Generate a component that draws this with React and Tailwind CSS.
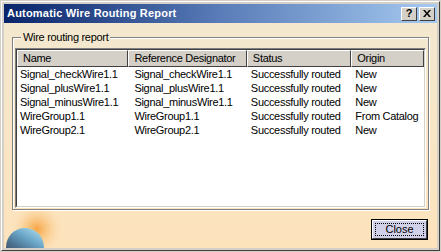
import React from "react";

const rows = [
  ["Signal_checkWire1.1", "Signal_checkWire1.1", "Successfully routed", "New"],
  ["Signal_plusWire1.1", "Signal_plusWire1.1", "Successfully routed", "New"],
  ["Signal_minusWire1.1", "Signal_minusWire1.1", "Successfully routed", "New"],
  ["WireGroup1.1", "WireGroup1.1", "Successfully routed", "From Catalog"],
  ["WireGroup2.1", "WireGroup2.1", "Successfully routed", "New"],
];

const cols = ["w-[112px]", "w-[119px]", "w-[105px]", "w-[73px]"];
const pads = ["pl-[3px]", "pl-[6px]", "pl-[4px]", "pl-[4px]"];

function Globe() {
  return (
    <svg className="absolute left-0 bottom-0" width="64" height="48" viewBox="0 0 64 48">
      <defs>
        <radialGradient id="glow" cx="0.5" cy="0.5" r="0.5">
          <stop offset="0" stopColor="#f6a03c" stopOpacity="0.95" />
          <stop offset="0.4" stopColor="#f8bc6c" stopOpacity="0.6" />
          <stop offset="1" stopColor="#fde3bd" stopOpacity="0" />
        </radialGradient>
        <linearGradient id="earth" x1="0.8" y1="0" x2="0.2" y2="1">
          <stop offset="0" stopColor="#a8d8ea" />
          <stop offset="0.3" stopColor="#6aa6c8" />
          <stop offset="0.6" stopColor="#4a6e8c" />
          <stop offset="1" stopColor="#3a3e48" />
        </linearGradient>
      </defs>
      <circle cx="33" cy="29" r="28" fill="url(#glow)" />
      <circle cx="21" cy="47" r="19" fill="url(#earth)" />
    </svg>
  );
}

export default function App() {
  return (
    <div
      className="w-[441px] h-[252px] bg-[#d4d0c8] border border-[#d4d0c8] overflow-hidden"
      style={{ fontFamily: '"Liberation Sans", Arial, sans-serif' }}
    >
      <div className="w-full h-full border border-t-white border-l-white border-r-[#404040] border-b-[#404040] p-[2px] flex flex-col">
        {/* Title bar */}
        <div className="h-[19px] flex items-center justify-between bg-gradient-to-r from-[#0a246a] via-[#5a7cb8] to-[#a6caf0] pl-[3px] pr-[2px]">
          <span className="text-white font-bold text-[11px] tracking-[0.2px]">Automatic Wire Routing Report</span>
          <div className="flex gap-[2px]">
            <div className="w-[16px] h-[14px] bg-[#d4d0c8] border border-t-white border-l-white border-r-[#404040] border-b-[#404040] flex items-center justify-center text-[11px] font-bold leading-none text-black">?</div>
            <div className="w-[16px] h-[14px] bg-[#d4d0c8] border border-t-white border-l-white border-r-[#404040] border-b-[#404040] flex items-center justify-center">
              <svg width="8" height="7" viewBox="0 0 8 7">
                <path d="M0 0h2l2 2.5L6 0h2L5 3.5 8 7H6L4 4.5 2 7H0l3-3.5z" fill="#000" />
              </svg>
            </div>
          </div>
        </div>
        {/* Content */}
        <div className="relative flex-1 bg-gradient-to-b from-[#f3e8cf] to-[#fde3bc] flex flex-col px-[8px] pt-[14px]">
          <Globe />
          {/* Group box */}
          <div className="relative border border-[#808080] h-[173px] shadow-[1px_1px_0_#ffffff,inset_1px_1px_0_#ffffff] px-[2px] pt-[10px] pb-[1px]">
            <span className="absolute left-[8px] -top-[8px] px-[2px] bg-[#f3e8cf] text-[11px] tracking-[-0.3px] text-black leading-[14px]">Wire routing report</span>
            <div className="h-full border border-t-[#808080] border-l-[#808080] border-r-white border-b-white">
              <div className="h-full border border-t-[#404040] border-l-[#404040] border-r-[#d4d0c8] border-b-[#d4d0c8] bg-white">
                <div className="flex">
                  {["Name", "Reference Designator", "Status", "Origin"].map((h, i) => (
                    <div
                      key={h}
                      className={`${cols[i]} h-[17px] bg-[#d4d0c8] border border-t-white border-l-white border-r-[#404040] border-b-[#404040] flex items-center pl-[5px] text-[11px] tracking-[-0.3px] text-black`}
                    >
                      {h}
                    </div>
                  ))}
                </div>
                {rows.map((r, ri) => (
                  <div key={ri} className="flex h-[14px] items-center text-[11px] tracking-[-0.3px] text-black">
                    {r.map((c, ci) => (
                      <div key={ci} className={`${cols[ci]} ${pads[ci]} whitespace-nowrap`}>
                        {c}
                      </div>
                    ))}
                  </div>
                ))}
              </div>
            </div>
          </div>
          {/* Button row */}
          <div className="flex justify-end mt-[9px] pr-[1px]">
            <div className="relative w-[57px] h-[21px] border border-black">
              <div className="w-full h-full border border-t-white border-l-white border-r-[#404040] border-b-[#404040] bg-[#d0d0e8] p-[2px]">
                <div className="w-full h-full border border-dotted border-black flex items-center justify-center text-[11px] text-black">
                  Close
                </div>
              </div>
            </div>
          </div>
        </div>
      </div>
    </div>
  );
}
